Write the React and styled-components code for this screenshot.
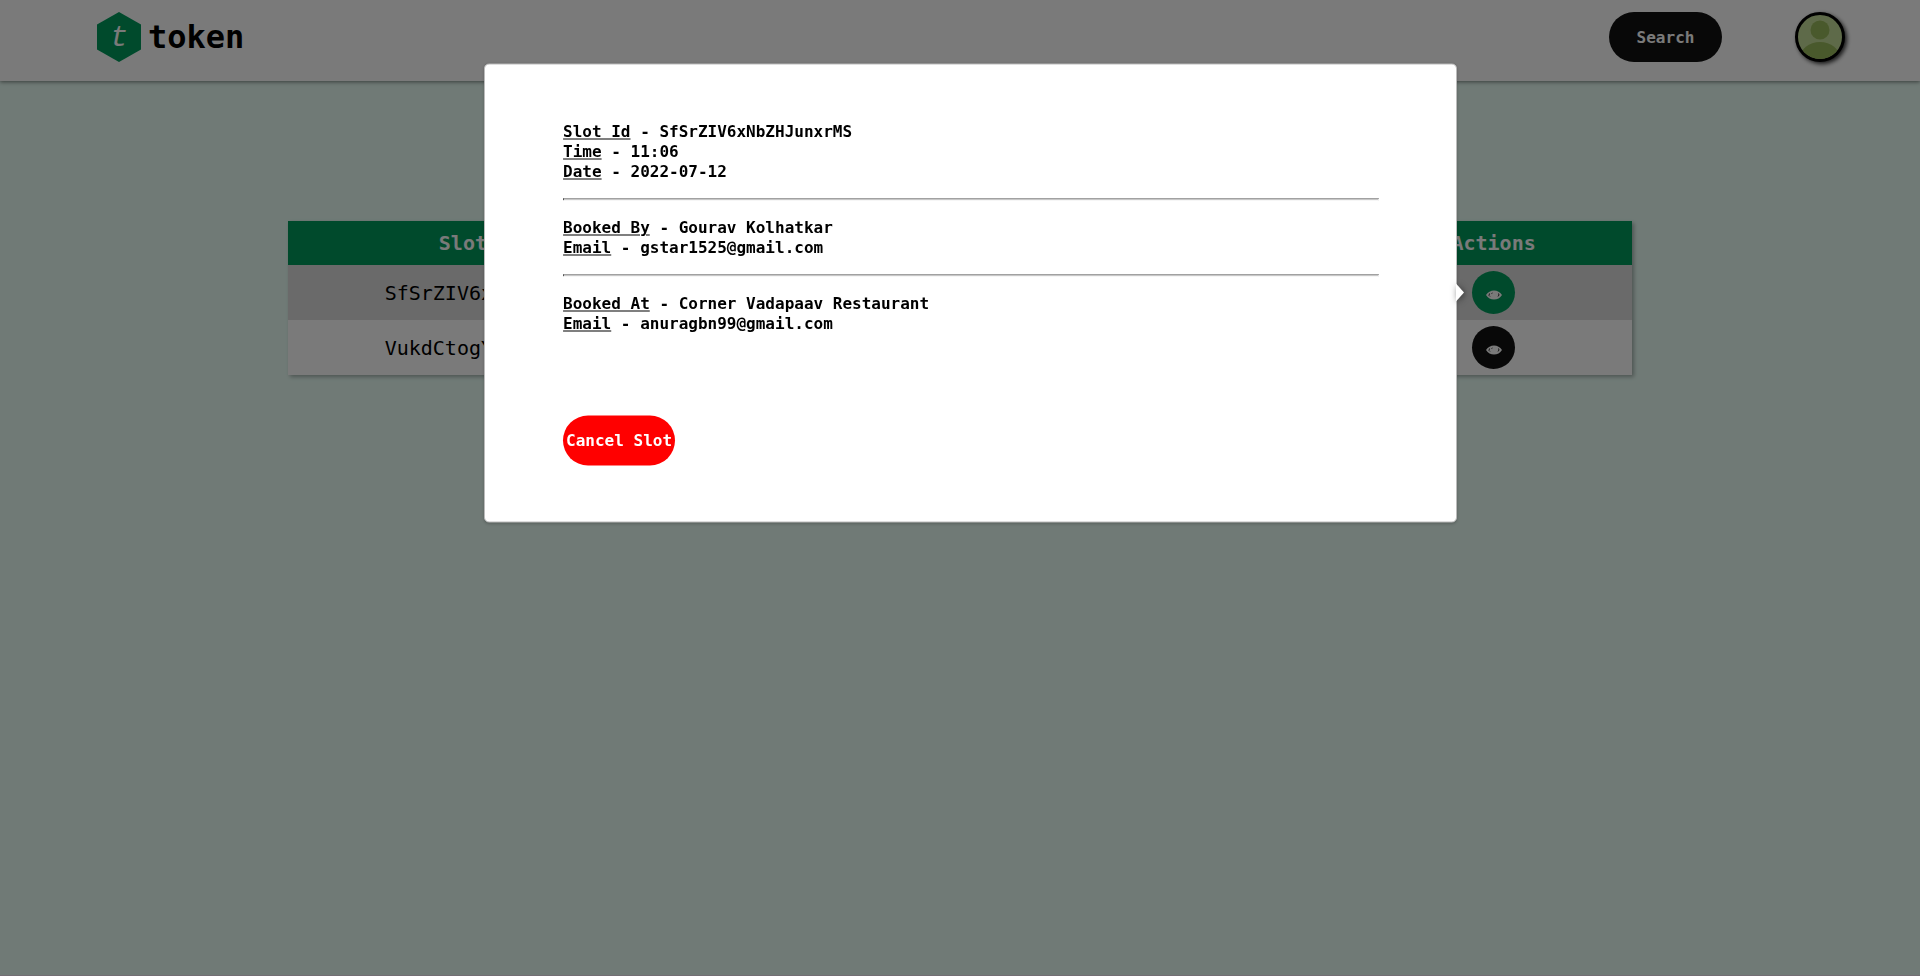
import React from "react";
import styled, { createGlobalStyle } from "styled-components";

const GlobalStyle = createGlobalStyle`
  * { box-sizing: border-box; }
  body {
    margin: 0;
    background: #eafff7;
    color: #000;
    font-family: "DejaVu Sans Mono", "Liberation Mono", monospace;
  }
  button { font-family: inherit; cursor: pointer; }
`;

const Page = styled.div`
  min-height: 100vh;
  border-bottom: 1px solid #f0e6f2;
`;

const Header = styled.header`
  display: flex;
  align-items: center;
  justify-content: space-between;
  height: 81px;
  padding: 0 75px 7px 96px;
  background: #fff;
  box-shadow: 0 1px 4px rgba(0, 0, 0, 0.5);
`;

const Brand = styled.a`
  display: flex;
  align-items: center;
  gap: 6px;
  color: #000;
  text-decoration: none;
  font-size: 32px;
  font-weight: bold;
  line-height: 40px;
`;

const HeaderActions = styled.div`
  display: flex;
  align-items: center;
  gap: 73px;
`;

const PillButton = styled.button`
  width: ${(p) => (p.$danger ? "112px" : "113px")};
  height: 50px;
  padding: 0;
  border: 0;
  border-radius: 25px;
  background: ${(p) => (p.$danger ? "#f00" : "#111")};
  color: #fff;
  font-size: 16px;
  font-weight: bold;
`;

const AvatarButton = styled.button`
  display: block;
  width: 50px;
  height: 50px;
  padding: 0;
  overflow: hidden;
  border: 3px solid #000;
  border-radius: 50%;
  background: #c5dd98;
  box-shadow: 2px 2px 4px rgba(0, 0, 0, 0.8);

  svg { display: block; }
`;

const Main = styled.main`
  width: 70%;
  margin: 0 auto;
  padding-top: 140px;
`;

const SlotTable = styled.table`
  width: 100%;
  table-layout: fixed;
  border-collapse: collapse;
  background: #fff;
  box-shadow: 2px 2px 4px rgba(0, 0, 0, 0.3);
  font-size: 20px;
  text-align: center;
`;

const HeadCell = styled.th`
  width: ${(p) => p.$width};
  height: 44px;
  padding: 0;
  background: #009b5c;
  color: #fff;
`;

const Row = styled.tr`
  background: ${(p) => (p.$active ? "#ddd" : "#fff")};
`;

const Cell = styled.td`
  height: 55px;
  padding: 0;
`;

const ActionAnchor = styled.div`
  position: relative;
  width: 43px;
  margin: 0 auto;
`;

const ViewButton = styled.button`
  display: flex;
  align-items: center;
  justify-content: center;
  width: 43px;
  height: 43px;
  padding: 4px 0 0;
  border: 0;
  border-radius: 50%;
  background: ${(p) => (p.$active ? "#009b5c" : "#111")};
`;

const Backdrop = styled.div`
  position: fixed;
  inset: 0;
  z-index: 10;
  background: rgba(0, 0, 0, 0.52);
`;

const Popup = styled.section`
  position: absolute;
  z-index: 11;
  top: 50%;
  right: calc(100% + 15px);
  transform: translateY(-50%);
  box-sizing: content-box;
  width: 42.5vw;
  padding: 57px 77px 56px 78px;
  border: 1px solid #bbb;
  border-radius: 5px;
  background: #fff;
  box-shadow: 0 1px 3px rgba(0, 0, 0, 0.2);
  font-size: 16px;
  font-weight: bold;
  line-height: 20px;
  text-align: left;

  u {
    text-decoration-thickness: 1px;
    text-underline-offset: 2px;
  }
`;

const Arrow = styled.svg`
  position: absolute;
  top: 50%;
  left: 100%;
  margin-top: -9px;
  filter: drop-shadow(1px 1px 3px rgba(0, 0, 0, 0.5));
`;

const Detail = styled.p`
  margin: 0;
`;

const Divider = styled.hr`
  margin: 17px 0;
  border: 1px inset #999;
  border-color: #999 #eee #eee #999;
`;

const PopupActions = styled.div`
  padding-top: 82px;
`;

const Logo = () => (
  <svg width="46" height="50" viewBox="0 0 46 50" aria-hidden="true">
    <path d="M23 0L45 12.500V37.500L23 50L1 37.500V12.500Z" fill="#009b5c" />
    <text x="23" y="34" textAnchor="middle" fill="#fff" fontFamily="Liberation Mono, monospace" fontSize="30" fontStyle="italic" fontWeight="400">t</text>
  </svg>
);

const Person = () => (
  <svg width="44" height="44" viewBox="0 0 44 44" aria-hidden="true">
    <circle cx="22" cy="15" r="9.500" fill="#9aba5c" />
    <ellipse cx="22" cy="43" rx="20" ry="16" fill="#9aba5c" />
  </svg>
);

const Eye = () => (
  <svg width="16" height="10" viewBox="0 0 16 10" aria-hidden="true">
    <path d="M0 5Q3 .5 8 .5T16 5Q13 9.500 8 9.500T0 5Z" fill="#fff" />
    <path d="M3.500 3.500L3 5.500L4 6.500M12.500 3.500L13 5L12 6.500M5.500 3.500L6.500 3" fill="none" stroke="#333" strokeWidth="1" />
  </svg>
);

const groups = [
  [["Slot Id", "SfSrZIV6xNbZHJunxrMS"], ["Time", "11:06"], ["Date", "2022-07-12"]],
  [["Booked By", "Gourav Kolhatkar"], ["Email", "gstar1525@gmail.com"]],
  [["Booked At", "Corner Vadapaav Restaurant"], ["Email", "anuragbn99@gmail.com"]],
];

const SlotPopup = () => (
  <Popup role="dialog" aria-label="Slot details">
    {groups.map((rows, i) => (
      <React.Fragment key={rows[0][0]}>
        {i > 0 && <Divider />}
        {rows.map(([label, value]) => (
          <Detail key={label}><u>{label}</u> - {value}</Detail>
        ))}
      </React.Fragment>
    ))}
    <PopupActions>
      <PillButton type="button" $danger>Cancel Slot</PillButton>
    </PopupActions>
    <Arrow width="8" height="18" viewBox="0 0 8 18" aria-hidden="true">
      <path d="M0 0L8 9L0 18Z" fill="#fff" />
    </Arrow>
  </Popup>
);

const ViewAction = ({ active }) => (
  <ActionAnchor>
    <ViewButton type="button" $active={active} aria-label="View slot"><Eye /></ViewButton>
    {active && <SlotPopup />}
  </ActionAnchor>
);

export default function App() {
  return (
    <Page>
      <GlobalStyle />
      <Header>
        <Brand href="#"><Logo />token</Brand>
        <HeaderActions>
          <PillButton type="button">Search</PillButton>
          <AvatarButton type="button" aria-label="Profile"><Person /></AvatarButton>
        </HeaderActions>
      </Header>
      <Main>
        <SlotTable>
          <thead>
            <tr>
              <HeadCell $width="32.3%">Slot Number</HeadCell>
              <HeadCell />
              <HeadCell $width="20.6%">Actions</HeadCell>
            </tr>
          </thead>
          <tbody>
            <Row $active>
              <Cell>SfSrZIV6xNbZHJunxrMS</Cell>
              <Cell />
              <Cell><ViewAction active /></Cell>
            </Row>
            <Row>
              <Cell>VukdCtogYkPqLmRsTwXz</Cell>
              <Cell />
              <Cell><ViewAction /></Cell>
            </Row>
          </tbody>
        </SlotTable>
      </Main>
      <Backdrop />
    </Page>
  );
}
